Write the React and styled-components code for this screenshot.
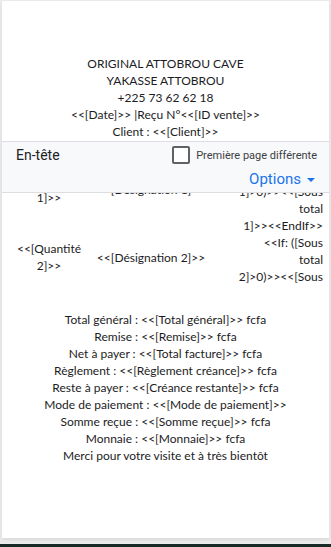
import React from "react";
import styled, { createGlobalStyle } from "styled-components";

const GlobalStyle = createGlobalStyle`
  html, body { margin: 0; padding: 0; }
  body { background: #ececec; overflow: hidden; }
`;

const Viewport = styled.div`
  width: 331px;
  height: 547px;
  box-sizing: border-box;
  background: #ebebeb;
  padding: 1px 2px 0 2px;
  display: flex;
  flex-direction: column;
`;

const Page = styled.div`
  position: relative;
  height: 537px;
  background: #ffffff;
  box-shadow: 0 2px 4px rgba(0, 0, 0, 0.08);
  font-family: Lato, "Open Sans", sans-serif;
  font-size: 12px;
  line-height: 17px;
  color: #1c1c24;
  padding-top: 54px;
  box-sizing: border-box;
  overflow: hidden;
`;

const BottomBar = styled.div`
  margin-top: auto;
  margin-left: -2px;
  margin-right: -2px;
  height: 3px;
  background: #182a28;
`;

const CenterBlock = styled.div`
  display: flex;
  flex-direction: column;
  align-items: center;
  text-align: center;
  margin-top: ${(p) => p.$top || 0}px;
`;

const Line = styled.div`
  white-space: nowrap;
`;

const Table = styled.div`
  display: grid;
  grid-template-columns: 82px 122px 1fr;
  padding: 0 6px;
  margin-top: 9px;
`;

const Row = styled.div`
  display: contents;
`;

const Cell = styled.div`
  height: ${(p) => p.$h}px;
  box-sizing: border-box;
  padding-bottom: ${(p) => p.$pb || 0}px;
  display: flex;
  flex-direction: column;
  justify-content: ${(p) => (p.$top ? "flex-start" : "center")};
  align-items: ${(p) => (p.$right ? "flex-end" : "center")};
  text-align: ${(p) => (p.$right ? "right" : "center")};
  white-space: nowrap;
`;

const Toolbar = styled.div`
  position: absolute;
  top: 140px;
  left: -2px;
  right: -2px;
  height: 52px;
  box-sizing: border-box;
  background: #f8f9fa;
  border-top: 1px solid #dcdee2;
  border-bottom: 1px solid #dcdee2;
  font-family: Roboto, Arial, sans-serif;
  display: flex;
  flex-direction: column;
  padding: 0 16px 0 16px;
`;

const ToolbarTop = styled.div`
  display: flex;
  align-items: center;
  justify-content: space-between;
  height: 26px;
`;

const Title = styled.span`
  font-size: 14px;
  color: #202124;
  margin-top: 1px;
`;

const CheckLabel = styled.label`
  display: flex;
  align-items: center;
  gap: 6px;
  font-size: 11px;
  color: #3c4043;
  margin-right: -2px;
`;

const Box = styled.span`
  width: 14px;
  height: 14px;
  border: 2px solid #5f6368;
  border-radius: 2px;
  background: #fff;
`;

const ToolbarBottom = styled.div`
  display: flex;
  justify-content: flex-end;
  align-items: center;
  height: 22px;
`;

const OptionsButton = styled.button`
  border: none;
  background: none;
  padding: 0;
  font-family: Roboto, Arial, sans-serif;
  font-size: 15px;
  color: #1a73e8;
  display: flex;
  align-items: center;
  gap: 6px;
`;

const Caret = styled.span`
  width: 0;
  height: 0;
  border-left: 4px solid transparent;
  border-right: 4px solid transparent;
  border-top: 4px solid #1a73e8;
  margin-top: 2px;
`;

const header = [
  "ORIGINAL ATTOBROU CAVE",
  "YAKASSE ATTOBROU",
  "+225 73 62 62 18",
  "<<[Date]>> |Reçu N°<<[ID vente]>>",
  "Client : <<[Client]>>",
];

const totals = [
  "Total général : <<[Total général]>> fcfa",
  "Remise : <<[Remise]>> fcfa",
  "Net à payer : <<[Total facture]>> fcfa",
  "Règlement : <<[Règlement créance]>> fcfa",
  "Reste à payer : <<[Créance restante]>> fcfa",
  "Mode de paiement : <<[Mode de paiement]>>",
  "Somme reçue : <<[Somme reçue]>> fcfa",
  "Monnaie : <<[Monnaie]>> fcfa",
  "Merci pour votre visite et à très bientôt",
];

const rows = [
  {
    h: 85,
    pb: 5,
    qty: ["<<[Quantité", "1]>>"],
    des: ["<<[Désignation 1]>>"],
    sub: ["<<If: ([Sous", "total", "1]>0)>><<[Sous", "total", "1]>><<EndIf>>"],
  },
  {
    h: 46,
    pb: 0,
    qty: ["<<[Quantité", "2]>>"],
    des: ["<<[Désignation 2]>>"],
    sub: ["<<If: ([Sous", "total", "2]>0)>><<[Sous"],
  },
];

export default function App() {
  return (
    <>
      <GlobalStyle />
      <Viewport>
        <Page>
          <CenterBlock>
            {header.map((t) => (
              <Line key={t}>{t}</Line>
            ))}
          </CenterBlock>
          <Table>
            {rows.map((r, i) => (
              <Row key={i}>
                <Cell $h={r.h} $pb={r.pb}>
                  {r.qty.map((t, j) => (
                    <Line key={j}>{t}</Line>
                  ))}
                </Cell>
                <Cell $h={r.h} $pb={r.pb}>
                  {r.des.map((t, j) => (
                    <Line key={j}>{t}</Line>
                  ))}
                </Cell>
                <Cell $h={r.h} $right $top>
                  {r.sub.map((t, j) => (
                    <Line key={j}>{t}</Line>
                  ))}
                </Cell>
              </Row>
            ))}
          </Table>
          <CenterBlock $top={31}>
            {totals.map((t) => (
              <Line key={t}>{t}</Line>
            ))}
          </CenterBlock>
          <Toolbar>
            <ToolbarTop>
              <Title>En-tête</Title>
              <CheckLabel>
                <Box />
                Première page différente
              </CheckLabel>
            </ToolbarTop>
            <ToolbarBottom>
              <OptionsButton>
                Options
                <Caret />
              </OptionsButton>
            </ToolbarBottom>
          </Toolbar>
        </Page>
        <BottomBar />
      </Viewport>
    </>
  );
}
